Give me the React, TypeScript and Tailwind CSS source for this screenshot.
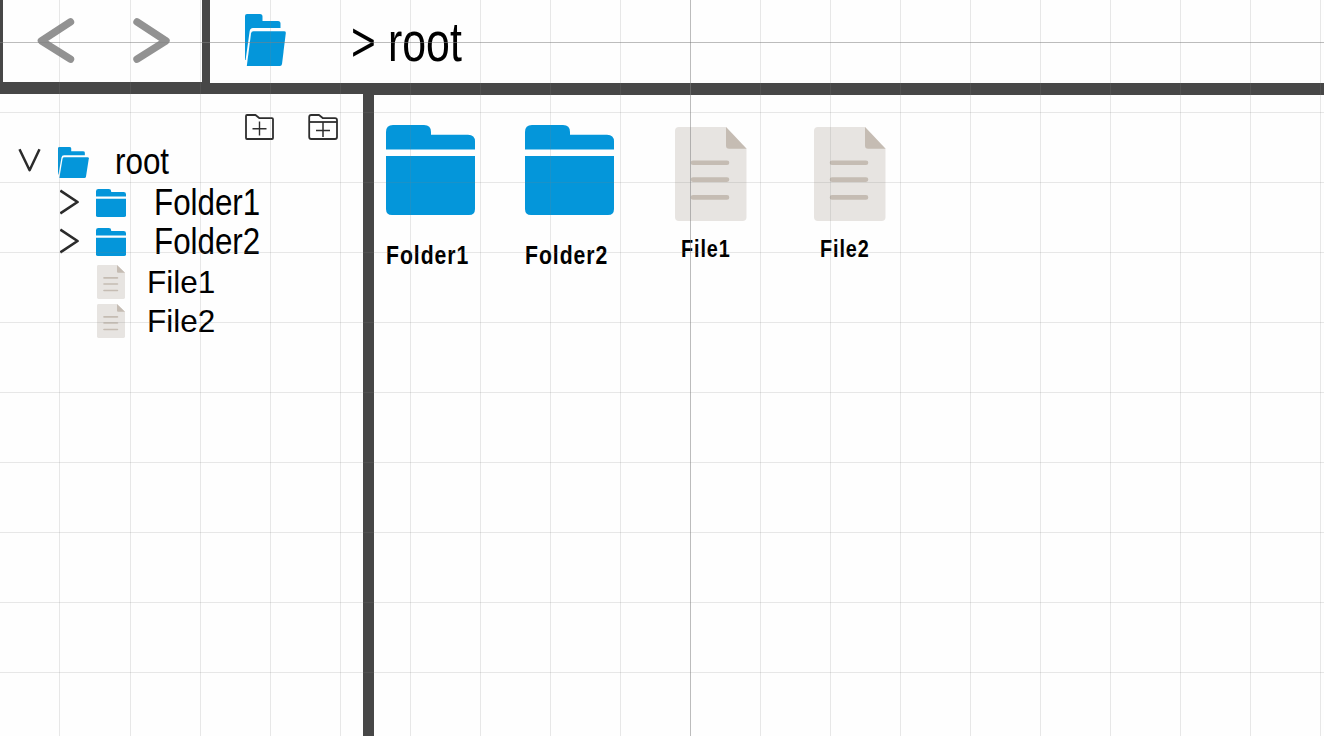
import type { ReactNode } from "react";

type IconProps = { className: string };

function OpenFolder({ className }: IconProps) {
  return (
    <svg className={className} viewBox="0 0 41 52" preserveAspectRatio="none" fill="#0496da">
      <path d="M0 2Q0 0 2 0H15Q17.5 0 17.5 2.5V7H33Q35.5 7 35.5 9.5V14H8Q5 14 4.6 17.5L.6 46H0Z" />
      <path d="M8.5 17.3H39Q41 17.3 40.8 19L37 50Q36.6 52 35 52H1.8L6 19.5Q6.3 17.3 8.5 17.3Z" />
    </svg>
  );
}

function Folder({ className }: IconProps) {
  return (
    <svg className={className} viewBox="0 0 89 90" preserveAspectRatio="none" fill="#0496da">
      <path d="M0 7Q0 0 7 0H38Q45 0 45 7V9.7H82Q89 9.7 89 16.5V24.5H0Z" />
      <path d="M0 31H89V84Q89 90 83 90H6Q0 90 0 84Z" />
    </svg>
  );
}

function FileIcon({ className }: IconProps) {
  return (
    <svg className={className} viewBox="0 0 71.5 94" preserveAspectRatio="none">
      <path d="M4 0H51L71.5 21.5V90Q71.5 94 67.5 94H4Q0 94 0 90V4Q0 0 4 0Z" fill="#e7e4e1" />
      <path d="M51 0L71.5 21.7H54Q51 21.7 51 18.7Z" fill="#c5bcb3" />
      <path d="M18 35.7H52M18 52.6H52M18 70.4H52" stroke="#c5bcb3" strokeWidth="4.6" strokeLinecap="round" />
    </svg>
  );
}

function Caret({ className }: IconProps) {
  return (
    <svg className={className} viewBox="0 0 20 26" fill="none" stroke="#2b2b2b" strokeWidth="2.7" strokeLinejoin="round">
      <path d="M.3 1.5L17.5 13L.3 24.5" />
    </svg>
  );
}

function TreeRow({ className, children }: { className: string; children: ReactNode }) {
  return <div className={`flex shrink-0 items-start whitespace-nowrap ${className}`}>{children}</div>;
}

const folders = ["Folder1", "Folder2"];
const files = ["File1", "File2"];

function Header() {
  return (
    <header className="flex h-[94px] shrink-0">
      <nav className="flex h-[94px] w-[210px] shrink-0 items-start border-b-[12px] border-l-[3px] border-r-8 border-[#474747] pl-[33px] pt-[17px]">
        <button aria-label="Back">
          <svg className="h-12 w-[40px]" viewBox="0 0 40 48" fill="none" stroke="#929292" strokeWidth="7.4" strokeLinecap="round" strokeLinejoin="round">
            <path d="M34.5 4.9L5.4 23.8L34.5 42.2" />
          </svg>
        </button>
        <button aria-label="Forward" className="ml-[56px]">
          <svg className="h-12 w-[40px]" viewBox="0 0 40 48" fill="none" stroke="#929292" strokeWidth="7.4" strokeLinecap="round" strokeLinejoin="round">
            <path d="M5 4.9L34 23.8L5 42.2" />
          </svg>
        </button>
      </nav>
      <div className="flex grow items-start border-b-[11px] border-[#474747] pl-[35px]">
        <OpenFolder className="mt-3.5 h-[52px] w-[41px]" />
        <span className="ml-[64.5px] mt-[14px] w-[37px] origin-left scale-x-[0.76] text-[56px] leading-none">&gt;</span>
        <span className="mt-[14px] origin-left scale-x-[0.765] text-[56px] leading-none">root</span>
      </div>
    </header>
  );
}

function Sidebar() {
  return (
    <aside className="flex w-[363px] shrink-0 flex-col">
      <div className="flex h-12 shrink-0 items-start gap-[33px] pl-[244px] pt-[19px]">
        <svg className="h-7 w-[31px]" viewBox="0 0 31 28" fill="none" stroke="#2e2e2e" strokeWidth="1.8" strokeLinejoin="round">
          <path d="M2 25V3Q2 2 3 2H11.5L15.5 5.2H28Q29 5.2 29 6.2V25Q29 26 28 26H3Q2 26 2 25Z" />
          <path d="M15.5 8.5V22.5M8.5 15.7H22.5" strokeWidth="1.4" />
        </svg>
        <svg className="h-7 w-[31px]" viewBox="0 0 31 28" fill="none" stroke="#2e2e2e" strokeWidth="1.8" strokeLinejoin="round">
          <path d="M1.2 24V4Q1.2 2 3.2 2H11L15 5.2H27Q29 5.2 29 7.2V24Q29 26 27 26H3.2Q1.2 26 1.2 24Z" />
          <path d="M1.2 9H29" />
          <path d="M15 9V24M8 17.5H22" strokeWidth="1.5" />
        </svg>
      </div>
      <TreeRow className="h-10 pl-[18px]">
        <svg className="mt-[6px] h-[26px] w-6" viewBox="0 0 24 26" fill="none" stroke="#2b2b2b" strokeWidth="2.5" strokeLinejoin="round">
          <path d="M1.5 1.2L11.6 22.2L21.5 1.2" />
        </svg>
        <OpenFolder className="ml-4 mt-[5px] h-[31px] w-[31px]" />
        <span className="ml-[26px] mt-0.5 origin-left scale-x-[0.86] text-[36.5px] leading-none">root</span>
      </TreeRow>
      {folders.map((name) => (
        <TreeRow key={name} className="h-[39px] pl-[60px]">
          <Caret className="mt-[7px] h-[26px] w-5" />
          <Folder className="ml-4 mt-[6.5px] h-7 w-[30px]" />
          <span className="ml-[28px] mt-[3px] origin-left scale-x-[0.87] text-[36px] leading-none">{name}</span>
        </TreeRow>
      ))}
      {files.map((name) => (
        <TreeRow key={name} className="h-[39px] pl-[97px]">
          <FileIcon className="mt-[5px] h-[34px] w-7" />
          <span className="ml-[22px] mt-[6px] origin-left scale-x-[0.985] text-[32px] leading-none">{name}</span>
        </TreeRow>
      ))}
    </aside>
  );
}

function Content() {
  return (
    <main className="flex grow items-start border-t border-[#474747] pl-3 pt-[29.5px] font-bold">
      {folders.map((name) => (
        <div key={name} className="flex w-[139px] shrink-0 flex-col items-start">
          <Folder className="h-[90px] w-[89px]" />
          <span className="mt-[27.5px] origin-left scale-x-[0.8] text-[26.5px] leading-none tracking-[1.2px]">{name}</span>
        </div>
      ))}
      <div className="ml-[11px] flex pt-[2.5px]">
        {files.map((name) => (
          <div key={name} className="flex w-[139px] shrink-0 flex-col items-start">
            <FileIcon className="h-[94px] w-[71.5px]" />
            <span className="ml-[6px] mt-[16px] origin-left scale-x-[0.81] text-[24.5px] leading-none tracking-[1.1px]">{name}</span>
          </div>
        ))}
      </div>
    </main>
  );
}

const columns = [59.5, 130.5, ...Array.from({ length: 17 }, (_, i) => 200.5 + i * 70)];
const rows = Array.from({ length: 10 }, (_, i) => 42.5 + i * 70);

function CanvasGrid() {
  return (
    <svg className="pointer-events-none absolute inset-0 h-full w-full" stroke="#808080" fill="none">
      {columns.map((x) => (
        <line key={x} x1={x} x2={x} y1="0" y2="736" strokeOpacity={x === 690.5 ? 0.53 : 0.18} />
      ))}
      {rows.map((y) => (
        <line key={y} x1="0" x2="1324" y1={y} y2={y} strokeOpacity={y === 42.5 ? 0.53 : 0.18} />
      ))}
    </svg>
  );
}

export default function App() {
  return (
    <div className="relative flex h-[736px] w-[1324px] flex-col overflow-hidden bg-[#fefefe] font-['Liberation_Sans',Arial,sans-serif] text-black">
      <Header />
      <div className="flex grow">
        <Sidebar />
        <div className="w-[11px] shrink-0 bg-[#474747]" />
        <Content />
      </div>
      <CanvasGrid />
    </div>
  );
}
